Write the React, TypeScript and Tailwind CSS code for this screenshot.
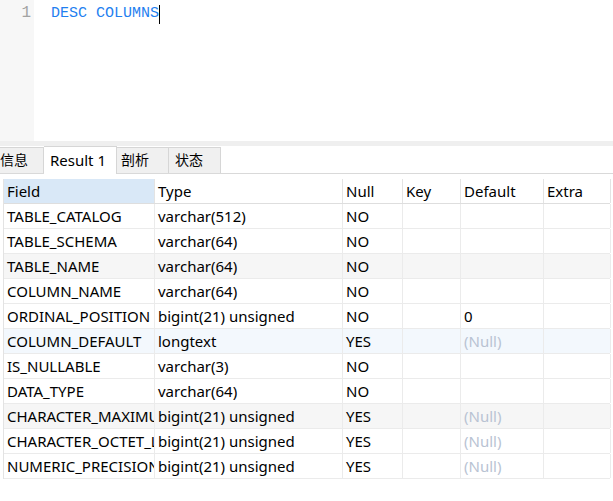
import React from 'react';

const cols = [
  { name: 'Field', w: 'w-[151px]' },
  { name: 'Type', w: 'w-[188px]' },
  { name: 'Null', w: 'w-[60px]' },
  { name: 'Key', w: 'w-[58px]' },
  { name: 'Default', w: 'w-[83px]' },
  { name: 'Extra', w: 'w-[67px]' },
];

type Row = [string, string, string, string, string | null, string];

const rows: Row[] = [
  ['TABLE_CATALOG', 'varchar(512)', 'NO', '', '', ''],
  ['TABLE_SCHEMA', 'varchar(64)', 'NO', '', '', ''],
  ['TABLE_NAME', 'varchar(64)', 'NO', '', '', ''],
  ['COLUMN_NAME', 'varchar(64)', 'NO', '', '', ''],
  ['ORDINAL_POSITION', 'bigint(21) unsigned', 'NO', '', '0', ''],
  ['COLUMN_DEFAULT', 'longtext', 'YES', '', null, ''],
  ['IS_NULLABLE', 'varchar(3)', 'NO', '', '', ''],
  ['DATA_TYPE', 'varchar(64)', 'NO', '', '', ''],
  ['CHARACTER_MAXIMUM_LENGTH', 'bigint(21) unsigned', 'YES', '', null, ''],
  ['CHARACTER_OCTET_LENGTH', 'bigint(21) unsigned', 'YES', '', null, ''],
  ['NUMERIC_PRECISION', 'bigint(21) unsigned', 'YES', '', null, ''],
];

function rowBg(i: number) {
  if (i === 5) return 'bg-[#f3f8fd]';
  if (i === 2 || i === 8) return 'bg-[#f6f6f6]';
  return 'bg-white';
}

export default function App() {
  return (
    <div className="w-[613px] h-[501px] bg-white overflow-hidden flex flex-col font-['Noto_Sans','Noto_Sans_CJK_SC',sans-serif] text-[15px] text-black">
      {/* editor */}
      <div className="h-[141px] flex shrink-0">
        <div className="w-[34px] bg-[#f7f7f7] pt-[2px] pr-[3px] text-right font-['Liberation_Mono',monospace] text-[16px] leading-[22px] text-[#a3a3a3]">
          1
        </div>
        <div className="pl-[17px] pt-[3px] flex items-start">
          <span className="font-['Liberation_Mono',monospace] text-[15px] leading-[22px] text-[#1f7ff0]">DESC COLUMNS</span>
          <span className="w-px h-[19px] bg-black mt-[2px]" />
        </div>
      </div>
      <div className="h-[5px] bg-[#efefef] shrink-0" />

      {/* tabs */}
      <div className="h-[28px] flex items-end border-b border-[#d9d9d9] shrink-0">
        <div className="-ml-[8px] w-[52px] h-[26px] bg-[#f0f0f0] border border-b-0 border-[#d6d6d6] pl-[7px] leading-[24px] text-[14px]">信息</div>
        <div className="w-[73px] h-[28px] bg-white border border-b-0 border-l-0 border-[#d6d6d6] pl-[6px] leading-[26px] -mb-px">Result 1</div>
        <div className="w-[52px] h-[26px] bg-[#f0f0f0] border border-b-0 border-l-0 border-[#d6d6d6] pl-[4px] leading-[24px] text-[14px]">剖析</div>
        <div className="w-[52px] h-[26px] bg-[#f0f0f0] border border-b-0 border-l-0 border-[#d6d6d6] pl-[6px] leading-[24px] text-[14px]">状态</div>
      </div>

      {/* grid */}
      <div className="mt-[5px] ml-[3px] flex flex-col w-[607px] border-l border-[#e3e3e3]">
        <div className="flex h-[25px] border-b border-[#dedede]">
          {cols.map((c, i) => (
            <div
              key={c.name}
              className={`${c.w} shrink-0 border-r border-[#e3e3e3] pl-[3px] leading-[24px] ${i === 0 ? 'bg-[#d9e8f7]' : 'bg-white'}`}
            >
              {c.name}
            </div>
          ))}
        </div>
        {rows.map((r, ri) => (
          <div key={r[0]} className={`flex h-[25px] border-b border-[#ebebeb] ${rowBg(ri)}`}>
            {r.map((v, ci) => (
              <div
                key={ci}
                className={`${cols[ci].w} shrink-0 border-r border-[#ebebeb] pl-[3px] leading-[24px] overflow-hidden whitespace-nowrap ${v === null ? 'text-[#b9c3d3]' : ''}`}
              >
                {v === null ? '(Null)' : v}
              </div>
            ))}
          </div>
        ))}
      </div>
    </div>
  );
}
